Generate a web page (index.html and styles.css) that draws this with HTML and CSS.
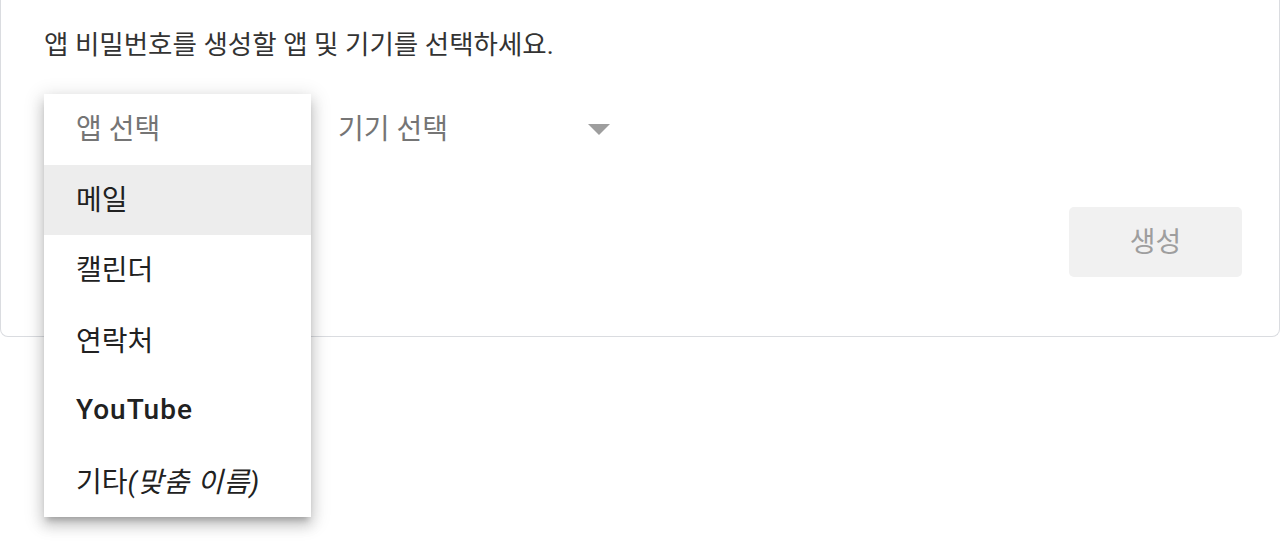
FILE: index.html
```html
<!DOCTYPE html>
<html lang="ko">
<head>
    <meta charset="UTF-8">
    <title>앱 비밀번호</title>
    <link rel="stylesheet" href="styles.css">
</head>
<body>
    <div class="card">
        <p class="intro">앱 비밀번호를 생성할 앱 및 기기를 선택하세요.</p>

        <div class="selectors">
            <div class="select app-select">
                <span class="select-label">앱 선택</span>

                <ul class="menu">
                    <li class="menu-item placeholder">앱 선택</li>
                    <li class="menu-item active">메일</li>
                    <li class="menu-item">캘린더</li>
                    <li class="menu-item">연락처</li>
                    <li class="menu-item brand">YouTube</li>
                    <li class="menu-item">기타<em>(맞춤 이름)</em></li>
                </ul>
            </div>

            <div class="select device-select">
                <span class="select-label">기기 선택</span>
                <span class="arrow"></span>
            </div>
        </div>

        <div class="actions">
            <button class="button-generate" disabled>생성</button>
        </div>
    </div>
</body>
</html>
```

FILE: styles.css
```css
* {
    margin: 0;
    padding: 0;
    box-sizing: border-box;
}

html,
body {
    min-height: 100vh;
}

body {
    font-family: Roboto, "Noto Sans CJK KR", sans-serif;
    background: #fff;
    color: #222;
}

.card {
    border: 1px solid #dadce0;
    border-top: none;
    border-radius: 0 0 8px 8px;
    padding: 28px 37px 59px 43px;
}

.intro {
    font-size: 26.5px;
    line-height: 34px;
    color: #333;
}

.selectors {
    display: flex;
    gap: 27px;
    margin-top: 32px;
    height: 70px;
}

.select {
    position: relative;
    display: flex;
    align-items: center;
    font-size: 28px;
    color: #757575;
}

.app-select {
    width: 267px;
    padding: 0 32px;
}

.device-select {
    width: 272px;
    justify-content: space-between;
}

.select-label {
    margin-top: -4px;
}

.arrow {
    width: 0;
    height: 0;
    border-left: 11px solid transparent;
    border-right: 11px solid transparent;
    border-top: 11px solid #9e9e9e;
}

.menu {
    position: absolute;
    top: 0;
    left: 0;
    width: 267px;
    list-style: none;
    background: #fff;
    z-index: 2;
    box-shadow: 0 8px 12px 1px rgba(0, 0, 0, 0.14),
                0 4px 18px 3px rgba(0, 0, 0, 0.12),
                0 6px 6px -3px rgba(0, 0, 0, 0.2);
}

.menu-item {
    height: 70.5px;
    padding: 0 32px 4px;
    display: flex;
    align-items: center;
    font-size: 28px;
    color: #212121;
    white-space: nowrap;
}

.menu-item.placeholder {
    color: #757575;
}

.menu-item.active {
    background: #ededed;
}

.menu-item.brand {
    font-weight: 500;
    letter-spacing: 1px;
}

.menu-item em {
    font-style: italic;
    letter-spacing: 0.5px;
}

.actions {
    display: flex;
    justify-content: flex-end;
    margin-top: 43px;
}

.button-generate {
    width: 173px;
    height: 70px;
    padding-bottom: 4px;
    border: none;
    border-radius: 5px;
    background: #f1f1f1;
    color: #9e9e9e;
    font-family: inherit;
    font-size: 28px;
}
```
